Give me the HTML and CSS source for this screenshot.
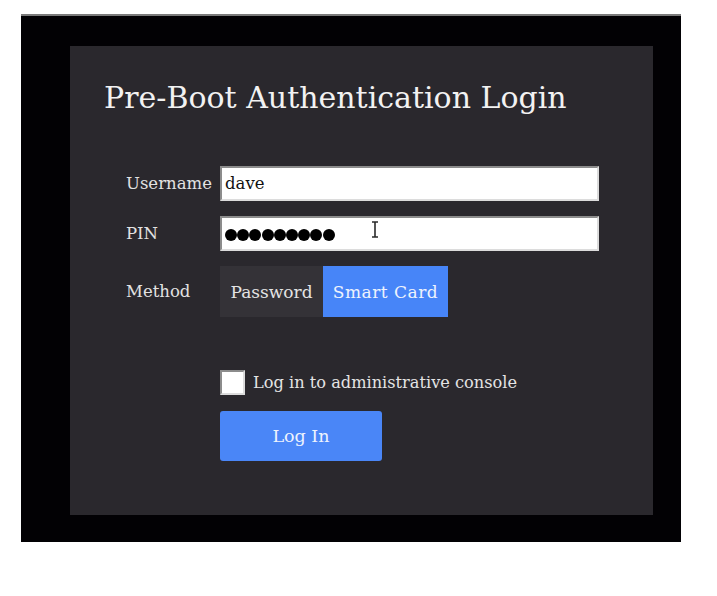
FILE: index.html
```html
<!DOCTYPE html>
<html>
<head>
<meta charset="utf-8">
<link rel="stylesheet" href="styles.css">
</head>
<body>
<div class="screen">
  <div class="panel">
    <h1 class="title">Pre-Boot Authentication Login</h1>
    <div class="form">
      <div class="label">Username</div>
      <div class="field"><span class="value">dave</span></div>
      <div class="label">PIN</div>
      <div class="field pin">
        <span class="dots"><i></i><i></i><i></i><i></i><i></i><i></i><i></i><i></i><i></i></span>
        <svg class="ibeam" width="8" height="17" viewBox="0 0 8 17"><path d="M1 1h6M4 1v15M1 16h6" stroke="#2b2b2b" stroke-width="1.6" fill="none"/></svg>
      </div>
      <div class="label">Method</div>
      <div class="methods">
        <div class="method pw">Password</div>
        <div class="method sc active">Smart Card</div>
      </div>
    </div>
    <div class="options">
      <div class="check-row">
        <span class="checkbox"></span>
        <span class="check-label">Log in to administrative console</span>
      </div>
      <div class="login">Log In</div>
    </div>
  </div>
</div>
</body>
</html>
```

FILE: styles.css
```css
html, body {
  margin: 0;
  padding: 0;
  background: #ffffff;
}

body {
  font-family: "DejaVu Serif", "Liberation Serif", serif;
}

.screen {
  margin: 14px 0 0 21px;
  width: 611px;
  height: 496px;
  background: #020104;
  border-top: 2px solid #7a7a7a;
  padding: 30px 0 0 49px;
  box-sizing: content-box;
}

.panel {
  width: 583px;
  height: 469px;
  background: #2a282d;
  padding: 34px 0 0 34px;
  box-sizing: border-box;
}

.title {
  margin: 0;
  font-weight: normal;
  font-size: 30px;
  line-height: 36px;
  color: #f2f2f2;
}

.form {
  margin: 50px 0 0 22px;
  display: grid;
  grid-template-columns: 94px 379px;
  row-gap: 15px;
  align-items: center;
}

.label {
  font-size: 16.5px;
  color: #e2e2e2;
}

.field {
  height: 35px;
  box-sizing: border-box;
  background: #ffffff;
  border-style: solid;
  border-width: 2px;
  border-color: #8c8c8c #dcdcdc #dcdcdc #8c8c8c;
  display: flex;
  align-items: center;
  padding-left: 3px;
  position: relative;
}

.value {
  font-size: 16.5px;
  color: #111;
}

.dots {
  display: flex;
  gap: 0.2px;
  margin-top: 2px;
}

.dots i {
  width: 12px;
  height: 12px;
  border-radius: 50%;
  background: #000;
}

.ibeam {
  position: absolute;
  left: 149px;
  top: 3px;
}

.methods {
  display: flex;
  height: 51px;
}

.method {
  display: flex;
  align-items: center;
  justify-content: center;
  font-size: 17px;
  background: #343237;
  color: #e4e4e4;
}

.method.pw {
  width: 103px;
}

.method.sc {
  width: 125px;
  letter-spacing: 0.5px;
}

.method.active {
  background: #4785f8;
  color: #eef3fd;
}

.options {
  margin: 53px 0 0 116px;
  display: flex;
  flex-direction: column;
  gap: 16px;
}

.check-row {
  display: flex;
  align-items: center;
  gap: 8px;
}

.checkbox {
  width: 25px;
  height: 25px;
  box-sizing: border-box;
  background: #ffffff;
  border-style: solid;
  border-width: 2px;
  border-color: #8c8c8c #dcdcdc #dcdcdc #8c8c8c;
}

.check-label {
  font-size: 16.2px;
  color: #e4e4e4;
}

.login {
  width: 162px;
  height: 50px;
  background: #4a86f7;
  border-radius: 3px;
  display: flex;
  align-items: center;
  justify-content: center;
  font-size: 17.5px;
  color: #eef3fd;
}
```
